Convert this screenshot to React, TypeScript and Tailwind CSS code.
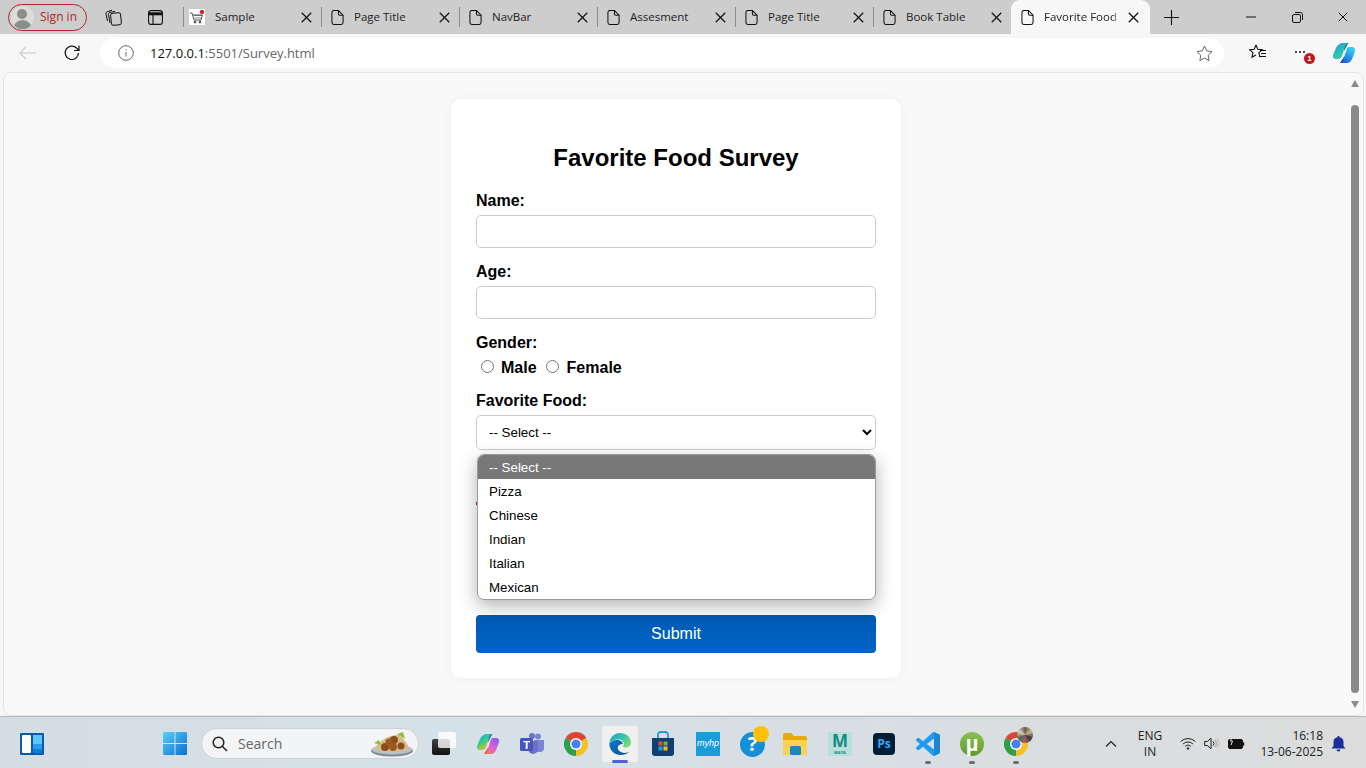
import React from "react";

const ui = { fontFamily: '"Open Sans", "Noto Sans", sans-serif' };

function DocIcon() {
  return (
    <svg width="13" height="17" viewBox="0 0 14 17" fill="none" stroke="#111" strokeWidth="1.100">
      <path d="M3 1h5l5 5v8a2 2 0 0 1-2 2H3a2 2 0 0 1-2-2V3a2 2 0 0 1 2-2z" />
      <path d="M8 1v3.500A1.500 1.500 0 0 0 9.500 6H13" />
    </svg>
  );
}
function CloseIcon({ s = 11, w = 1.1 }: { s?: number; w?: number }) {
  return (
    <svg width={s} height={s} viewBox="0 0 10 10" stroke="#111" strokeWidth={w} fill="none">
      <path d="M.7.7l8.600 8.600M9.300.7L.7 9.300" />
    </svg>
  );
}
function CartIcon() {
  return (
    <div className="w-4 h-4 bg-white flex items-center justify-center relative shrink-0">
      <svg width="16" height="16" viewBox="0 0 16 16" fill="none" stroke="#555" strokeWidth="1">
        <path d="M1 4h2l2 7h7l1.500-5H4" />
        <path d="M5 6.500h8M5.500 9h7" strokeWidth=".7" />
        <circle cx="6" cy="13" r="1" fill="#555" />
        <circle cx="11" cy="13" r="1" fill="#555" />
        <circle cx="13" cy="3" r="2.200" fill="#e0202c" stroke="none" />
      </svg>
    </div>
  );
}

function Tab({ title, icon }: { title: string; icon?: React.ReactNode }) {
  return (
    <div className="w-[138px] h-[34px] flex items-center shrink-0 relative">
      <div className="absolute left-0 top-[7px] h-5 w-px bg-[#8d8d8d]" />
      {icon ? (
        <div className="w-[16px] ml-[6px] mr-[10px] flex justify-center">{icon}</div>
      ) : (
        <div className="w-[16px] ml-[8px] mr-[9px] flex justify-center"><DocIcon /></div>
      )}
      <span className="text-[11.5px] text-[#222] flex-1 whitespace-nowrap" style={ui}>{title}</span>
      <span className="mr-[9px] flex"><CloseIcon /></span>
    </div>
  );
}

function Copilot({ id, a, b, c, d }: { id: string; a: string[]; b: string[]; c: string; d: string }) {
  return (
    <svg width="24" height="24" viewBox="0 0 24 24">
      <defs>
        <linearGradient id={`${id}l`} x1="0" y1="0" x2=".6" y2="1">
          {a.map((col, i) => <stop key={i} offset={i / (a.length - 1)} stopColor={col} />)}
        </linearGradient>
        <linearGradient id={`${id}r`} x1=".6" y1="0" x2="0" y2="1">
          {b.map((col, i) => <stop key={i} offset={i / (b.length - 1)} stopColor={col} />)}
        </linearGradient>
      </defs>
      <path d="M12 2h5c-1.500.5-2 2-2.500 3.500L12 10z" fill={c} />
      <path d="M8 22h5c1.500-.5 2.500-1.500 3-3l1-5-5 2z" fill={d} />
      <path d="M7 3.500C8 2.500 9 2 10.500 2H16c-1.200.3-2 1-2.400 2.200L10 15c-.6 2-2 3-4 3H3.500C1.500 18 .5 16 1 14L4 7c.6-1.500 1.600-2.500 3-3.500z" fill={`url(#${id}l)`} />
      <path d="M17 6h3c2.500 0 3.500 2 3 4l-2.500 7c-1 3-3 5-6 5H8c1.500-.3 2.500-1.200 3-2.500L14.500 9c.5-2 1.300-3 2.500-3z" fill={`url(#${id}r)`} />
    </svg>
  );
}

function Chrome({ s = 24 }: { s?: number }) {
  return (
    <svg width={s} height={s} viewBox="0 0 24 24">
      <path d="M12 12L1.600 6A12 12 0 0 1 22.400 6Z" fill="#db4437" />
      <path d="M12 12L22.400 6A12 12 0 0 1 12 24Z" fill="#f6c026" />
      <path d="M12 12L12 24A12 12 0 0 1 1.600 6Z" fill="#2f9e48" />
      <circle cx="12" cy="12" r="6" fill="#fff" />
      <circle cx="12" cy="12" r="4.600" fill="#4a80ee" />
    </svg>
  );
}

function Edge() {
  return (
    <svg width="24" height="24" viewBox="0 0 26 26">
      <defs>
        <linearGradient id="edg" x1="0" y1="0" x2="1" y2=".6">
          <stop offset="0" stopColor="#1ba2c8" /><stop offset=".6" stopColor="#36c4a8" /><stop offset="1" stopColor="#7fdc7a" />
        </linearGradient>
        <linearGradient id="edb" x1="0" y1="0" x2="1" y2="1">
          <stop offset="0" stopColor="#0e78c8" /><stop offset="1" stopColor="#0a4f9a" />
        </linearGradient>
      </defs>
      <path d="M1.500 12C2 5.500 7 1 13 1c6.800 0 12 4.800 12 10.500 0 3.500-2.800 5.500-5.800 5.500-2 0-3-.7-3-1.500 0-.6 1-1 1-2.800 0-2.500-2.500-4.700-5.700-4.700-4.500 0-8.500 2-11 4z" fill="url(#edg)" />
      <path d="M1.500 12c2.500-2.400 5.500-3.300 8-3.300 4 0 6.500 1.800 6.500 4.300-3 .2-5.500 1.300-5.500 4 0 3.300 4.200 5.700 8 5.700 1.700 0 3.300-.4 4.500-1.200C20.500 24 17 25 13.500 25 6.500 25 1 19.500 1.500 12z" fill="url(#edb)" />
    </svg>
  );
}

function Store() {
  return (
    <svg width="24" height="26" viewBox="0 0 24 26">
      <path d="M7 7V4a3 3 0 0 1 3-3h4a3 3 0 0 1 3 3v3" fill="none" stroke="#2a9bd8" strokeWidth="1.800" />
      <path d="M1 7h22v15a3 3 0 0 1-3 3H4a3 3 0 0 1-3-3z" fill="#123f73" />
      <rect x="7.500" y="10.500" width="4" height="4" fill="#e8502c" />
      <rect x="12.500" y="10.500" width="4" height="4" fill="#74b82c" />
      <rect x="7.500" y="15.500" width="4" height="4" fill="#1d9ee8" />
      <rect x="12.500" y="15.500" width="4" height="4" fill="#fdb913" />
    </svg>
  );
}

function Folder() {
  return (
    <svg width="24" height="22" viewBox="0 0 24 22">
      <path d="M0 2a2 2 0 0 1 2-2h6l3 3h11a2 2 0 0 1 2 2v15a2 2 0 0 1-2 2H2a2 2 0 0 1-2-2z" fill="#e8a80e" />
      <path d="M0 7h24v13a2 2 0 0 1-2 2H2a2 2 0 0 1-2-2z" fill="#fbd34e" />
      <rect x="7" y="13" width="11" height="9" rx="1.500" fill="#1a83d4" />
    </svg>
  );
}

function Slot({ children, w = "w-[44px]", dot }: { children: React.ReactNode; w?: string; dot?: boolean }) {
  return (
    <div className={`${w} h-[38px] flex items-center justify-center relative shrink-0`}>
      {children}
      {dot && <div className="absolute bottom-[-1px] left-1/2 -ml-[3px] w-[6px] h-[3px] rounded-full bg-[#6e6e6e]" />}
    </div>
  );
}

export default function App() {
  const tabs = ["Page Title", "NavBar", "Assesment", "Page Title", "Book Table"];
  const labelCls = "block text-[16px] leading-[18px] font-bold text-black";
  const inputCls = "block w-full h-[33px] mt-[5px] border border-[#ccc] rounded-[5px] bg-white";
  return (
    <div className="w-[1366px] h-[768px] overflow-hidden flex flex-col bg-[#f7f7f7]" style={{ fontFamily: '"Liberation Sans", Arial, sans-serif' }}>
      {/* Tab strip */}
      <div className="h-[34px] bg-[#cdcdcd] flex items-center shrink-0">
        <div className="ml-[8px] w-[79px] h-[27px] rounded-full border border-[#b3252b] flex items-center shrink-0">
          <div className="w-[23px] h-[23px] ml-[2px] rounded-full bg-[#dcdcd8] overflow-hidden relative">
            <div className="w-[10px] h-[10px] rounded-full bg-[#8e8c88] absolute left-[6px] top-[3px]" />
            <div className="w-[19px] h-[10px] rounded-t-full bg-[#8e8c88] absolute left-[2px] top-[14px]" />
          </div>
          <span className="ml-[6px] text-[12px] text-[#b3252b]" style={ui}>Sign in</span>
        </div>
        <div className="w-[52px] flex justify-center">
          <svg width="17" height="17" viewBox="0 0 17 17" fill="none" stroke="#111" strokeWidth="1">
            <rect x="6" y="4" width="10" height="12" rx="2" transform="rotate(-6 11 10)" />
            <path d="M5 14L3.500 5.500c-.2-1 .4-2 1.500-2.200L10 2.500" />
            <path d="M2.500 12L1 5c-.2-1 .3-2 1.300-2.300L7 1.200" />
          </svg>
        </div>
        <div className="w-[32px] flex justify-center">
          <svg width="15" height="15" viewBox="0 0 15 15" fill="none" stroke="#111" strokeWidth="1.100">
            <rect x=".6" y=".6" width="13.800" height="13.800" rx="2.500" />
            <path d="M.6 3.800h13.800" strokeWidth="3" />
            <path d="M5 4v10.400" />
          </svg>
        </div>
        <div className="w-[12px] shrink-0" />
        <Tab title="Sample" icon={<CartIcon />} />
        {tabs.map((t, i) => <Tab key={i} title={t} />)}
        <div className="w-[139px] h-[34px] bg-[#f7f7f7] rounded-t-[9px] flex items-center shrink-0">
          <div className="ml-[8px] w-[16px] flex justify-center"><DocIcon /></div>
          <span className="ml-[9px] w-[76px] overflow-hidden whitespace-nowrap text-[11.5px] text-[#222] [mask-image:linear-gradient(to_right,black_90%,transparent)]" style={ui}>Favorite Food Survey</span>
          <span className="ml-[8px] flex"><CloseIcon /></span>
        </div>
        <div className="ml-[14px] flex">
          <svg width="15" height="15" viewBox="0 0 15 15" stroke="#111" strokeWidth="1.100"><path d="M7.500 0v15M0 7.500h15" /></svg>
        </div>
        <div className="flex-1" />
        <div className="w-[46px] flex justify-center">
          <svg width="10" height="10" viewBox="0 0 10 10" stroke="#111"><path d="M0 5h10" /></svg>
        </div>
        <div className="w-[46px] flex justify-center">
          <svg width="11" height="11" viewBox="0 0 11 11" fill="none" stroke="#111">
            <rect x=".5" y="2.500" width="8" height="8" rx="1.500" /><path d="M3 .5h5.500a2 2 0 0 1 2 2V8" />
          </svg>
        </div>
        <div className="w-[46px] flex justify-center"><CloseIcon s={10} w={1} /></div>
      </div>

      {/* Toolbar */}
      <div className="h-[38px] flex items-center shrink-0 bg-[#f7f7f7]">
        <div className="w-[100px] flex items-center shrink-0">
          <div className="ml-[19px]">
            <svg width="18" height="14" viewBox="0 0 18 14" fill="none" stroke="#c9c9c9" strokeWidth="1.100"><path d="M17 7H1M7 1L1 7l6 6" /></svg>
          </div>
          <div className="ml-[26px]">
            <svg width="18" height="18" viewBox="0 0 18 18" fill="none" stroke="#111" strokeWidth="1.200"><path d="M15.500 9A6.700 6.700 0 1 1 13.500 4L16 6.500" /><path d="M16 1.500v5h-5" /></svg>
          </div>
        </div>
        <div className="w-[1124px] h-[30px] bg-white rounded-full flex items-center shrink-0 relative">
          <svg className="ml-[18px]" width="16" height="16" viewBox="0 0 16 16" fill="none" stroke="#666" strokeWidth="1"><circle cx="8" cy="8" r="7.300" /><path d="M8 7v4.500" /><path d="M8 4.200v1.200" /></svg>
          <span className="ml-[16px] pt-[1px] text-[13px] text-[#666]" style={ui}><span className="text-[#111]">127.0.0.1</span>:5501/Survey.html</span>
          <svg className="absolute left-[1096px] top-[7px]" width="17" height="17" viewBox="0 0 17 17" fill="none" stroke="#666" strokeWidth="1"><path d="M8.500 1l2.300 4.900 5.200.7-3.800 3.700.9 5.300-4.600-2.600-4.600 2.600.9-5.300L1 6.600l5.200-.7z" /></svg>
        </div>
        <div className="ml-[25px] relative w-[18px] h-[18px] shrink-0">
          <svg width="18" height="18" viewBox="0 0 18 18" fill="none" stroke="#111" strokeWidth="1.100"><path d="M7 1l1.800 4.300 4.500.4-3.400 3 1 4.500" /><path d="M7 1L5.200 5.300l-4.700.4 3.500 3-1 4.500L7 10.900" /><path d="M11 6.500h6M12 9.500h5M10.500 12.500h6.500" /></svg>
        </div>
        <div className="ml-[25px] relative w-[20px] h-[20px] shrink-0">
          <div className="absolute left-[3px] top-[8px] flex gap-[2px]">
            <div className="w-[2px] h-[2px] rounded-full bg-[#111]" /><div className="w-[2px] h-[2px] rounded-full bg-[#111]" /><div className="w-[2px] h-[2px] rounded-full bg-[#111]" />
          </div>
          <div className="absolute left-[12px] top-[10px] w-[11px] h-[11px] rounded-full bg-[#c4161c] text-white text-[8px] font-bold leading-[11px] text-center">1</div>
        </div>
        <div className="ml-[20px] shrink-0 flex">
          <Copilot id="cpe" a={["#1c9ce0", "#38d69a"]} b={["#35d0f0", "#1450d8"]} c="#0a6f90" d="#1230a8" />
        </div>
      </div>

      {/* Page viewport */}
      <div className="h-[644px] shrink-0 flex pl-[3px] pr-[2px] relative">
        <div className="flex-1 bg-[#f9f9f9] rounded-[8px] border border-[#e4e4e4] flex overflow-hidden">
          <div className="flex-1 flex justify-center pt-[26px]">
            <div className="w-[450px] h-[579px] bg-white rounded-[10px] shadow-[0_0_10px_rgba(0,0,0,0.05)] px-[25px] pt-[45px] relative">
              <h2 className="text-[24px] leading-[28px] font-bold text-black text-center">Favorite Food Survey</h2>
              <label className={`${labelCls} mt-[20px]`}>Name:</label>
              <input className={inputCls} type="text" />
              <label className={`${labelCls} mt-[15px]`}>Age:</label>
              <input className={inputCls} type="text" />
              <label className={`${labelCls} mt-[15px]`}>Gender:</label>
              <div className="mt-[7px] ml-[5px] flex items-center h-[18px] text-[16px] font-bold text-black">
                <input type="radio" name="g" className="w-[13px] h-[13px] m-0 mb-[3px]" />
                <span className="ml-[7px]">Male</span>
                <input type="radio" name="g" className="w-[13px] h-[13px] ml-[9px] mb-[3px]" />
                <span className="ml-[8px]">Female</span>
              </div>
              <label className={`${labelCls} mt-[15px]`}>Favorite Food:</label>
              <select className="block w-full h-[35px] mt-[5px] border border-[#ccc] rounded-[5px] bg-white pl-[8px] text-[13.333px] text-black">
                <option>-- Select --</option>
              </select>
              <div className="h-[165px]" />
              <button className="block w-full h-[38px] rounded-[4px] bg-gradient-to-b from-[#005ab3] to-[#0064c8] text-white text-[16px]">Submit</button>

              {/* Open select popup */}
              <div className="absolute left-[25px] top-[403px] w-[1px] h-[3px] bg-[#a33c10]" />
              <div className="absolute left-[26px] top-[355px] w-[399px] h-[146px] bg-white rounded-[7px] border border-[#9b9b9b] overflow-hidden shadow-[0_6px_18px_rgba(0,0,0,0.3)] text-[13.333px] text-black">
                <div className="h-[24px] bg-[#787878] text-white pl-[11px] pt-[1px] leading-[24px]">-- Select --</div>
                {["Pizza", "Chinese", "Indian", "Italian", "Mexican"].map((o) => (
                  <div key={o} className="h-[24px] pl-[11px] pt-[1px] leading-[24px]">{o}</div>
                ))}
              </div>
            </div>
          </div>
          {/* Scrollbar */}
          <div className="w-[15px] shrink-0 flex flex-col items-center pr-[2px] pt-[7px]">
            <div className="w-0 h-0 border-l-[4.5px] border-r-[4.5px] border-b-[7px] border-l-transparent border-r-transparent border-b-[#8a8a8a]" />
            <div className="w-[8px] h-[588px] mt-[18px] rounded-full bg-[#8a8a8a]" />
            <div className="w-0 h-0 mt-[8px] border-l-[4.5px] border-r-[4.5px] border-t-[7px] border-l-transparent border-r-transparent border-t-[#8a8a8a]" />
          </div>
        </div>
      </div>

      {/* Taskbar */}
      <div className="h-[52px] shrink-0 border-t border-[#b8b8b8] pt-[2px] bg-gradient-to-r from-[#d4dde2] via-[#d5e1e9] via-30% to-[#dcdcdc] flex items-center relative" style={ui}>
        <div className="ml-[20px] w-[24px] h-[22px] bg-[#0d5aa8] rounded-[1px] flex gap-[2px] p-[2px] shrink-0">
          <div className="w-[9px] bg-white rounded-[1px]" />
          <div className="flex-1 flex flex-col">
            <div className="flex-1 bg-[#5cc8fa]" />
            <div className="h-[5px] bg-[#2a9df0]" />
            <div className="h-[4px] bg-[#0f7fd8]" />
          </div>
        </div>
        <div className="ml-[119px] shrink-0 flex">
          <svg width="24" height="23" viewBox="0 0 24 23">
            <defs><linearGradient id="win" x1="0" y1="0" x2="1" y2="1"><stop offset="0" stopColor="#5ad0fa" /><stop offset="1" stopColor="#0a6fd0" /></linearGradient></defs>
            <path d="M0 1a1 1 0 0 1 1-1h10.500v11H0zM12.500 0H23a1 1 0 0 1 1 1v10H12.500zM0 12h11.500v11H1a1 1 0 0 1-1-1zM12.500 12H24v10a1 1 0 0 1-1 1H12.500z" fill="url(#win)" />
          </svg>
        </div>
        <div className="ml-[14px] w-[218px] h-[31px] rounded-full bg-[#f3f4f5] border border-[#d0d0d0] flex items-center relative shrink-0">
          <svg className="ml-[10px]" width="16" height="16" viewBox="0 0 16 16" fill="none" stroke="#222" strokeWidth="1.500"><circle cx="6.500" cy="6.500" r="5.300" /><path d="M10.500 10.500L15 15" /></svg>
          <span className="ml-[10px] text-[14px] text-[#666]">Search</span>
          <svg className="absolute left-[167px] top-[2px]" width="44" height="27" viewBox="0 0 44 27">
            <ellipse cx="23" cy="20" rx="21" ry="5.500" fill="#7f8c94" />
            <ellipse cx="23" cy="18.500" rx="20" ry="5" fill="#b9c2c7" />
            <path d="M6 17C10 9 22 3 30 4c4 3 9 9 10 13-8 5-26 5-34 0z" fill="#d8bc85" />
            <path d="M5 12l5-3 2 5zM28 3l6-2 2 7z" fill="#8cbf3f" />
            <circle cx="16" cy="16" r="4" fill="#8a4d20" /><circle cx="25" cy="9" r="4" fill="#8a4d20" />
            <circle cx="20" cy="11" r="3.500" fill="#9a5a26" /><circle cx="24" cy="16" r="4" fill="#9a5a26" /><circle cx="32" cy="15" r="3.500" fill="#8a4d20" />
          </svg>
        </div>
        <div className="ml-[3px] flex shrink-0 relative">
          <Slot>
            <div className="relative w-[24px] h-[23px]">
              <div className="absolute left-0 bottom-0 w-[18px] h-[16px] rounded-[2px] bg-gradient-to-b from-[#444] to-[#111]" />
              <div className="absolute right-0 top-0 w-[18px] h-[16px] rounded-[2px] bg-white/80" />
            </div>
          </Slot>
          <Slot>
            <Copilot id="cpt" a={["#1f9fe8", "#2ccf8a", "#f8c020"]} b={["#9a5cf0", "#e860c8", "#f8803a"]} c="#3a50d8" d="#e8402c" />
          </Slot>
          <Slot>
            <svg width="25" height="22" viewBox="0 0 25 22">
              <circle cx="18" cy="3.500" r="3" fill="#7b83d8" /><circle cx="12" cy="3" r="3" fill="#6a72cc" />
              <path d="M14 7h10v8a4 4 0 0 1-4 4h-2a4 4 0 0 1-4-4z" fill="#7b83d8" />
              <path d="M8 8h10v8a5 5 0 0 1-10 0z" fill="#6a72cc" />
              <rect x="0" y="5" width="13" height="13" rx="1.500" fill="#4b53bc" />
              <text x="6.500" y="15.500" fontSize="11" fontWeight="700" fill="#fff" textAnchor="middle" fontFamily="Liberation Sans">T</text>
            </svg>
          </Slot>
          <Slot><Chrome /></Slot>
          <div className="w-[38px] h-[38px] mx-[3px] rounded-[4px] bg-[#f0f0f0] border border-[#e2e2e2] flex items-center justify-center relative shrink-0">
            <Edge />
            <div className="absolute bottom-[-1px] left-1/2 -ml-[8px] w-[16px] h-[3px] rounded-full bg-[#4a63d8]" />
          </div>
          <Slot w="w-[42px]"><Store /></Slot>
          <Slot w="w-[48px]">
            <div className="w-[24px] h-[24px] bg-[#1a9cd8] flex items-center justify-center text-white text-[9px] italic" style={{ fontFamily: '"Liberation Sans", sans-serif' }}>myhp</div>
          </Slot>
          <Slot w="w-[42px]">
            <div className="relative w-[26px] h-[26px]">
              <div className="w-[25px] h-[25px] mt-[1px] rounded-full bg-[#1590d8] flex items-center justify-center text-white text-[20px] font-bold leading-none">?</div>
              <div className="absolute right-[-3px] top-[-5px] w-[16px] h-[16px] rounded-full bg-[#ffc107]" />
            </div>
          </Slot>
          <Slot w="w-[42px]"><Folder /></Slot>
          <Slot w="w-[48px]">
            <div className="w-[24px] h-[24px] bg-[#b8e0da] flex flex-col items-center overflow-hidden">
              <span className="h-[17px] text-[#138a82] text-[17px] font-bold leading-[17px]">M</span>
              <span className="h-[5px] mt-[1px] text-[#138a82] text-[4px] font-bold leading-[5px]">MAYA</span>
            </div>
          </Slot>
          <Slot w="w-[40px]">
            <div className="w-[22px] h-[22px] rounded-[4px] bg-[#001e36] flex items-center justify-center text-[#31a8ff] text-[12px] font-bold">Ps</div>
          </Slot>
          <Slot w="w-[48px]" dot>
            <svg width="24" height="24" viewBox="0 0 24 24">
              <path fillRule="evenodd" d="M23.150 2.587L18.210.21a1.494 1.494 0 0 0-1.705.29l-9.460 8.630-4.120-3.128a.999.999 0 0 0-1.276.057L.327 7.261A1 1 0 0 0 .326 8.740L3.899 12 .326 15.260a1 1 0 0 0 .001 1.479L1.650 17.940a.999.999 0 0 0 1.276.057l4.120-3.128 9.460 8.630a1.492 1.492 0 0 0 1.704.29l4.942-2.377A1.500 1.500 0 0 0 24 20.060V3.939a1.500 1.500 0 0 0-.850-1.352zm-5.146 14.861L10.826 12l7.178-5.448v10.896z" fill="#1f9cf0" />
              <path d="M18 .1l5.150 2.487A1.500 1.500 0 0 1 24 3.939V20.060a1.500 1.500 0 0 1-.850 1.352L18 23.900z" fill="#1a86d8" />
            </svg>
          </Slot>
          <Slot w="w-[40px]" dot>
            <div className="w-[24px] h-[24px] rounded-full bg-gradient-to-b from-[#8cc152] to-[#5d9a2e] flex items-center justify-center text-white text-[22px] font-bold leading-none" style={{ fontFamily: '"Liberation Sans", sans-serif' }}>µ</div>
          </Slot>
          <Slot w="w-[48px]" dot>
            <Chrome />
            <div className="absolute left-[25px] top-[2px] w-[16px] h-[16px] rounded-full bg-[conic-gradient(#6b5a4a,#c9b48a,#3a3a32,#a85a6a,#4a6a4a,#d8d0c0,#6b5a4a)]" />
          </Slot>
        </div>
        <div className="flex-1" />
        <div className="flex items-center shrink-0 text-[#222]">
          <svg width="12" height="7" viewBox="0 0 12 7" fill="none" stroke="#222" strokeWidth="1.200"><path d="M1 6.500l5-5 5 5" /></svg>
          <div className="ml-[17px] w-[32px] text-center text-[12px] leading-[16px]"><div>ENG</div><div>IN</div></div>
          <svg className="ml-[14px]" width="16" height="13" viewBox="0 0 16 13" fill="none" stroke="#222" strokeWidth="1"><path d="M.7 4.500a10.500 10.500 0 0 1 14.600 0M3 7a7.200 7.200 0 0 1 10 0M5.300 9.300a3.800 3.800 0 0 1 5.400 0" /><circle cx="8" cy="11.500" r=".8" fill="#222" /></svg>
          <svg className="ml-[8px]" width="16" height="13" viewBox="0 0 16 13" fill="none" stroke="#222" strokeWidth="1"><path d="M.7 4.500h2.600L7 1.200v10.600L3.300 8.500H.7z" /><path d="M9 4.300a3 3 0 0 1 0 4.400" /><path d="M11 3a5 5 0 0 1 0 7" stroke="#999" /><path d="M13 1.500a7.500 7.500 0 0 1 0 10" stroke="#bbb" /></svg>
          <svg className="ml-[8px]" width="17" height="13" viewBox="0 0 17 13" fill="none" stroke="#111" strokeWidth="1"><rect x=".5" y="2.500" width="14" height="9" rx="1.500" fill="#111" /><path d="M15.500 5.500v3" strokeWidth="1.500" /><path d="M4 0L2.500 4h2l-1.500 4" stroke="#ddd" /></svg>
          <div className="ml-[14px] w-[64px] text-right text-[12px] leading-[16px]"><div>16:18</div><div className="whitespace-nowrap">13-06-2025</div></div>
          <svg className="ml-[8px] mr-[20px]" width="15" height="16" viewBox="0 0 15 16" fill="#1b2f9c"><path d="M7.500 0a1 1 0 0 1 1 1.200A5 5 0 0 1 12.500 6v4l2 2.500H.5l2-2.500V6a5 5 0 0 1 4-4.800A1 1 0 0 1 7.500 0z" /><path d="M5.500 13.500h4a2 2 0 0 1-4 0z" /></svg>
        </div>
      </div>
    </div>
  );
}
